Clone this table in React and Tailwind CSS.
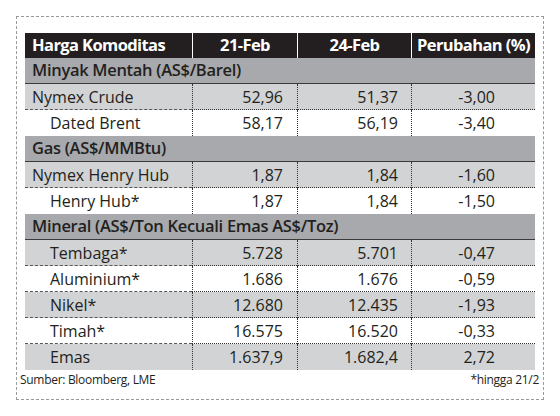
import React from 'react'

const rows = [
  { type: 'section', label: 'Minyak Mentah (AS$/Barel)' },
  { label: 'Nymex Crude', a: '52,96', b: '51,37', c: '-3,00', shade: true },
  { label: 'Dated Brent', a: '58,17', b: '56,19', c: '-3,40', indent: true },
  { type: 'section', label: 'Gas (AS$/MMBtu)' },
  { label: 'Nymex Henry Hub', a: '1,87', b: '1,84', c: '-1,60', shade: true },
  { label: 'Henry Hub*', a: '1,87', b: '1,84', c: '-1,50', indent: true },
  { type: 'section', label: 'Mineral (AS$/Ton Kecuali Emas AS$/Toz)' },
  { label: 'Tembaga*', a: '5.728', b: '5.701', c: '-0,47', shade: true, indent: true },
  { label: 'Aluminium*', a: '1.686', b: '1.676', c: '-0,59', indent: true },
  { label: 'Nikel*', a: '12.680', b: '12.435', c: '-1,93', shade: true, indent: true },
  { label: 'Timah*', a: '16.575', b: '16.520', c: '-0,33', indent: true },
  { label: 'Emas', a: '1.637,9', b: '1.682,4', c: '2,72', shade: true, indent: true },
]

const App = () => {
  return (
    <div className="w-[560px] h-[416px] bg-white pt-4 pl-4 text-[#231f20]" style={{ fontFamily: '"Open Sans", sans-serif' }}>
      <div className="w-[528px] h-[384px] border border-dashed border-[#9a9a9a] pt-[16px] pl-[8px]">
        <div className="w-[510px]">
          {/* header */}
          <div className="flex h-[25px] bg-[#231f20] text-white font-bold text-[16.5px] tracking-[-0.6px]">
            <div className="w-[167px] pl-[7px] flex items-center">Harga Komoditas</div>
            <div className="w-[105px] border-l border-white flex items-center justify-center">21-Feb</div>
            <div className="w-[114px] border-l border-white flex items-center justify-center">24-Feb</div>
            <div className="w-[124px] border-l border-white flex items-center justify-center">Perubahan (%)</div>
          </div>

          {rows.map((row, i) => {
            if (row.type === 'section') {
              return (
                <div key={i} className="h-[26px] bg-[#a7a9ac] border-b border-[#3a3a3a] flex items-center pl-[7px] text-[16.5px] font-semibold tracking-[-0.3px]">
                  {row.label}
                </div>
              )
            }
            const next = rows[i + 1]
            const last = !next || next.type === 'section'
            return (
              <div key={i} className={`flex h-[26px] text-[16px] ${row.shade ? 'bg-[#d1d3d4]' : 'bg-white'}`}>
                <div className={`w-[167px] flex items-center ${row.indent ? 'pl-[25px]' : 'pl-[7px]'} ${last ? '' : 'border-b border-dashed border-[#555]'}`}>{row.label}</div>
                <div className={`w-[105px] flex items-center justify-end pr-[14px] border-l border-dotted border-[#333] ${last ? '' : 'border-b'}`}>{row.a}</div>
                <div className={`w-[114px] flex items-center justify-end pr-[13px] border-l border-dotted border-[#333] ${last ? '' : 'border-b'}`}>{row.b}</div>
                <div className={`w-[124px] flex items-center justify-end pr-[40px] border-l border-dotted border-[#333] ${last ? '' : 'border-b'}`}>{row.c}</div>
              </div>
            )
          })}
        </div>
        <div className="flex justify-between w-[519px] -ml-[5px] mt-[1px] text-[12px] tracking-[-0.3px]">
          <span>Sumber: Bloomberg, LME</span>
          <span>*hingga 21/2</span>
        </div>
      </div>
    </div>
  )
}

export default App
